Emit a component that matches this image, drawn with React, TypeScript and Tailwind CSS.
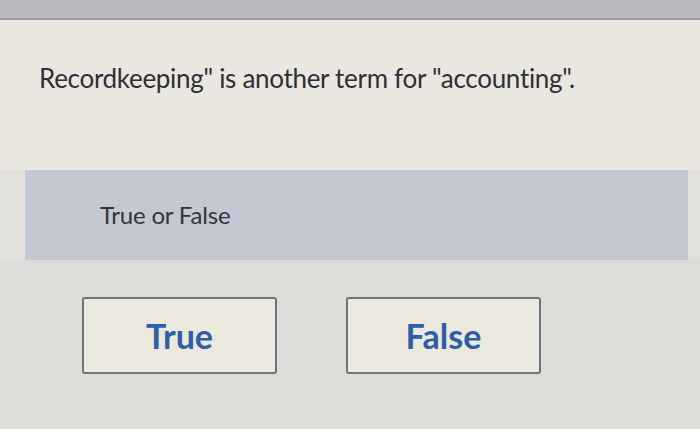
import React from 'react'

const choices = ['True', 'False']

const App: React.FC = () => {
  return (
    <div className="w-[700px] h-[429px] overflow-hidden bg-[#dedcd7] flex flex-col" style={{ fontFamily: 'Lato, "Open Sans", sans-serif' }}>
      {/* browser chrome strip */}
      <div className="h-[20px] bg-[#b7b8bc] border-b-2 border-[#9a9ca1] shrink-0" />

      <div className="h-[150px] bg-[#e9e7e0] flex items-start pl-[39px] pt-[39px] shrink-0">
        <p className="text-[26px] leading-[39px] text-[#2f2f33] tracking-[-0.3px]">
          Recordkeeping" is another term for "accounting".
        </p>
      </div>

      <div className="flex bg-[#e3e1db]">
        <div className="ml-[25px] w-[663px] h-[90px] bg-[#c3c8d3] pl-[75px] pt-[29px]">
          <span className="text-[24px] leading-[32px] text-[#33353b] tracking-[-0.2px]">True or False</span>
        </div>
        <div className="flex-1 bg-[#e2e0da]" />
      </div>

      <div className="flex-1 bg-[#dddcd8] flex items-start gap-[69px] pl-[82px] pt-[37px]">
        {choices.map((c) => (
          <button
            key={c}
            className="w-[195px] h-[77px] bg-[#ebe8de] border-2 border-[#6e7480] rounded-[3px] flex items-center justify-center text-[34px] font-bold text-[#2f5ea6]"
            style={{ fontFamily: 'Lato, "Open Sans", sans-serif' }}
          >
            {c}
          </button>
        ))}
      </div>
    </div>
  )
}

export default App
